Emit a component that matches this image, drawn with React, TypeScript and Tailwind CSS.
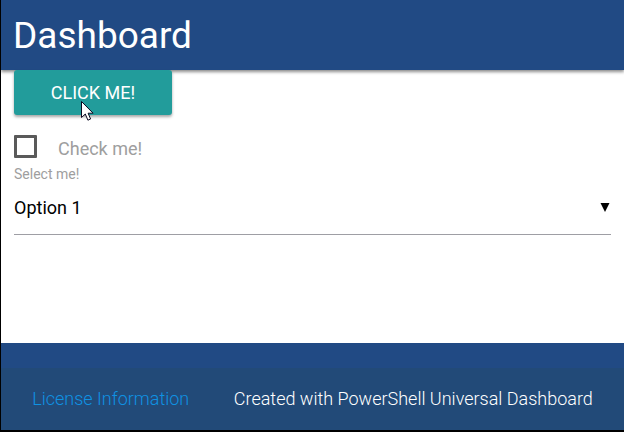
import React from "react";

function Pointer() {
  return (
    <svg
      aria-hidden="true"
      className="pointer-events-none absolute left-[67px] top-[31px]"
      width="13"
      height="21"
      viewBox="0 0 13 21"
    >
      <path
        d="M.5.5V16.5L4.3 13L6.9 19.2L9.6 18L7.1 12.2H12.1Z"
        fill="#fff"
        stroke="#0b0b22"
        strokeWidth="1"
      />
    </svg>
  );
}

export default function App() {
  return (
    <div className="flex min-h-screen flex-col border-b-2 border-l border-black bg-white font-['Roboto','Liberation_Sans',sans-serif] text-lg text-black">
      <header className="relative z-10 flex h-[70px] items-center bg-[#214a84] px-3 shadow-[0_2px_3px_rgba(0,0,0,0.45)]">
        <h1 className="text-[37px] leading-none text-white">Dashboard</h1>
      </header>

      <main className="flex flex-1 flex-col items-stretch px-[13px]">
        <div className="relative z-20 self-start">
          <button
            type="button"
            className="block h-[45px] min-w-[158px] rounded-[3px] bg-[#229c9b] px-9 text-lg text-white uppercase shadow-[0_2px_3px_rgba(0,0,0,0.35)]"
          >
            Click me!
          </button>
          <Pointer />
        </div>

        <label className="mt-5 flex items-start gap-[21px] self-start leading-7 text-[#9e9e9e]">
          <input
            type="checkbox"
            className="size-[23px] appearance-none rounded-[1px] border-3 border-[#5a5a5a] bg-white checked:bg-[#229c9b]"
          />
          Check me!
        </label>

        <label htmlFor="option" className="mt-px text-sm text-[#9e9e9e]">
          Select me!
        </label>
        <div className="grid items-center border-b border-[#9e9ea4] pb-0.5">
          <select
            id="option"
            className="col-start-1 row-start-1 h-12 w-full appearance-none bg-transparent text-lg text-black outline-none"
          >
            <option>Option 1</option>
          </select>
          <svg
            aria-hidden="true"
            className="pointer-events-none col-start-1 row-start-1 mr-px mb-0.5 justify-self-end"
            width="10"
            height="9"
            viewBox="0 0 10 9"
          >
            <path d="M0.5 0H9.5L5 9Z" fill="#000" />
          </svg>
        </div>
      </main>

      <footer className="bg-[#214a84] pt-[25px] font-light">
        <div className="bg-[#224a78]">
          <div className="mx-auto flex h-[62px] w-[90%] items-center justify-between">
            <a href="#license" className="text-[#0f92e3]">
              License Information
            </a>
            <span className="text-white">Created with PowerShell Universal Dashboard</span>
          </div>
        </div>
      </footer>
    </div>
  );
}
